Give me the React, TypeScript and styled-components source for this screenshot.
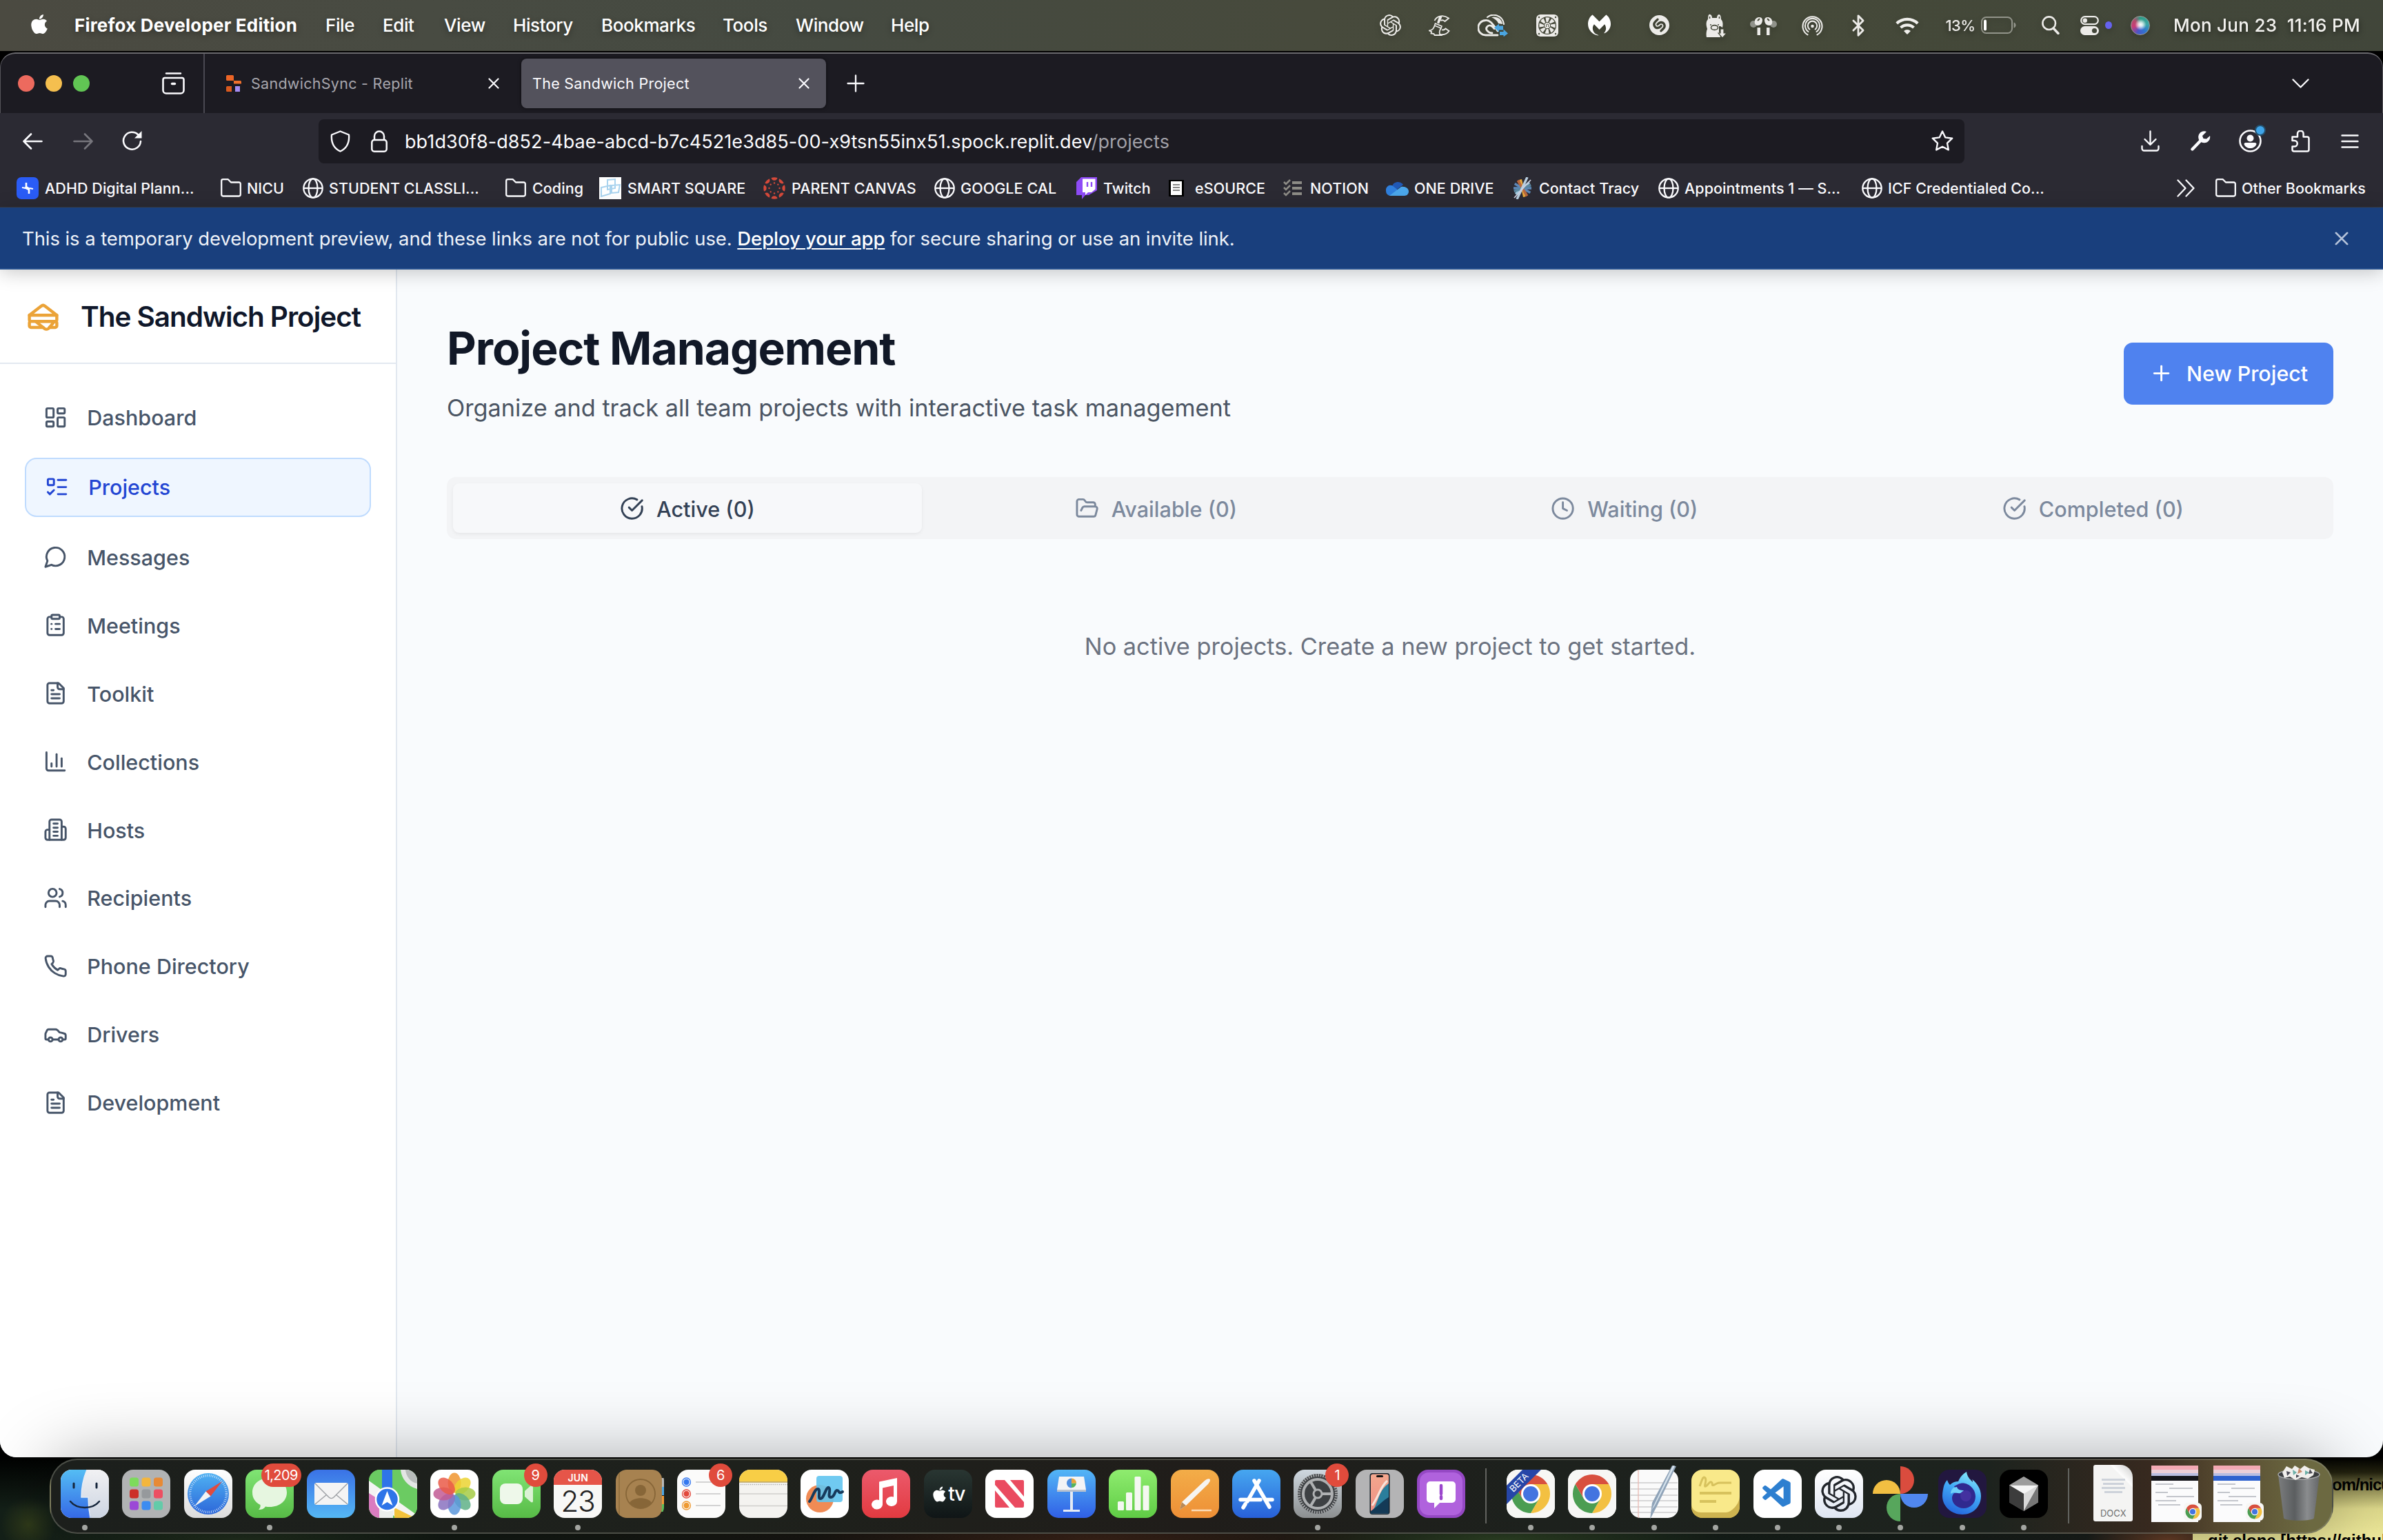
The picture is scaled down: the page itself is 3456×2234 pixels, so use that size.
import React from "react";
import styled, { createGlobalStyle } from "styled-components";
import { LayoutDashboard, ListTodo, ClipboardList, ChartColumn, Users, Car, CircleCheckBig, FolderOpen, Clock, Plus, Bluetooth } from "lucide-react";
import { FaApple, FaTwitch } from "react-icons/fa";
import { SiMalwarebytes, SiShazam, SiFirefoxbrowser } from "react-icons/si";
import { VscVscode } from "react-icons/vsc";

const font = `Inter, "Liberation Sans", sans-serif`;

const GlobalStyle = createGlobalStyle`
  * { box-sizing: border-box; }
  html, body { margin: 0; padding: 0; background: #000; }
  body { width: 3456px; height: 2234px; overflow: hidden; font-family: ${font}; }
  svg { display: block; flex: none; }
`;

/* ---------- desktop ---------- */

const Desktop = styled.div`
  position: relative;
  width: 3456px;
  height: 2234px;
  overflow: hidden;
  display: flex;
  flex-direction: column;
  background:
    linear-gradient(#000, #000) 0 0 / 100% 2100px no-repeat,
    linear-gradient(180deg, #000 2110px, transparent 2190px),
    radial-gradient(40px 40px at 1.2% 99%, #2f3a1a 0%, transparent 100%),
    radial-gradient(300px 40px at 10% 100%, #22301f 0%, transparent 100%),
    radial-gradient(420px 50px at 46% 100%, #3c2519 0%, transparent 100%),
    radial-gradient(320px 40px at 63% 100%, #2f4526 0%, transparent 100%),
    radial-gradient(120px 40px at 91% 100%, #6b4028 0%, transparent 100%),
    linear-gradient(90deg, #142018 0%, #131a14 20%, #1d1512 45%, #16201a 70%, #1b1d1c 100%);
`;

const StickyNote = styled.div`
  position: absolute;
  left: 3180px;
  top: 2114px;
  width: 276px;
  height: 120px;
  background: linear-gradient(180deg, #000 0, #23220f 22px, #9a965c 50px, #ddd88b 75px, #f0eb9c 100%);
  color: #000;
  font: 700 24px "Liberation Sans", sans-serif;
  white-space: nowrap;
  overflow: hidden;
`;
const StickyLine = styled.div<{ $left: number; $top: number; $ls?: number }>`
  position: absolute;
  left: ${(p) => p.$left}px;
  top: ${(p) => p.$top}px;
  line-height: 32px;
  letter-spacing: ${(p) => p.$ls ?? 0}px;
`;

/* ---------- menu bar ---------- */

const MenuBar = styled.header`
  flex: none;
  height: 74px;
  padding: 0 35px 1px 41px;
  display: flex;
  align-items: center;
  background: linear-gradient(90deg, #4b4a41 0%, #484b42 18%, #454a41 35%, #474a3c 55%, #454939 75%, #41463a 100%);
  color: #fff;
  font-size: 26px;
  text-shadow: 0 3px 8px rgba(0, 0, 0, 0.35);
`;
const AppleMark = styled.div`
  width: 67px;
  padding-bottom: 3px;
`;
const MenuLabel = styled.span<{ $w: number; $bold?: boolean }>`
  width: ${(p) => p.$w}px;
  font-weight: ${(p) => (p.$bold ? 700 : 500)};
  letter-spacing: ${(p) => (p.$bold ? 0.2 : -0.4)}px;
  white-space: nowrap;
`;
const StatusArea = styled.div`
  margin-left: auto;
  display: flex;
  align-items: center;
  color: #ecebe8;
  filter: drop-shadow(0 3px 4px rgba(0, 0, 0, 0.2));
`;
const StatusItem = styled.div<{ $w: number; $gap: number }>`
  width: ${(p) => p.$w}px;
  margin-left: ${(p) => p.$gap}px;
  display: flex;
  align-items: center;
  justify-content: center;
`;
const Percent = styled.span`
  font-size: 22px;
  font-weight: 500;
  letter-spacing: -0.6px;
`;
const ClockText = styled.div`
  width: 269px;
  margin-left: 34px;
  margin-right: 0;
  font-weight: 500;
  white-space: pre;
  color: #f2f1ee;
  letter-spacing: 0.28px;
`;
const Siri = styled.div`
  width: 28px;
  height: 28px;
  border-radius: 50%;
  border: 1px solid #9a9a96;
  background:
    radial-gradient(circle at 52% 45%, #fff 0%, rgba(255, 255, 255, 0.75) 16%, transparent 42%),
    conic-gradient(from 0deg, #2f9c86, #3aa7a5 80deg, #2f74d0 140deg, #4a55c8 200deg, #c93c78 260deg, #b5496b 310deg, #2f9c86);
`;
const MicDot = styled.div`
  width: 10px;
  height: 11px;
  border-radius: 50%;
  background: #6562ee;
`;

/* ---------- browser window ---------- */

const BrowserWindow = styled.section`
  flex: none;
  margin-top: 2px;
  height: 2038px;
  border-radius: 22px 22px 24px 24px;
  overflow: hidden;
  display: flex;
  flex-direction: column;
  background: #1c1b22;
`;
const TabStrip = styled.div`
  flex: none;
  height: 88px;
  border-top: 2px solid #6a696e;
  border-left: 1px solid #55545a;
  border-right: 1px solid #55545a;
  border-radius: 22px 22px 0 0;
  display: flex;
  align-items: center;
  padding-left: 25px;
  background: #1c1b22;
`;
const Lights = styled.div`
  display: flex;
  gap: 16px;
  width: 209px;
`;
const Light = styled.i<{ $c: string }>`
  width: 24px;
  height: 24px;
  border-radius: 50%;
  background: ${(p) => p.$c};
`;
const StripDivider = styled.div`
  width: 2px;
  height: 86px;
  margin: 0 7px 0 27px;
  background: #4a4952;
`;
const Tab = styled.div<{ $active?: boolean }>`
  width: ${(p) => (p.$active ? 442 : 440)}px;
  height: 72px;
  margin-left: ${(p) => (p.$active ? 8 : 4)}px;
  padding: 0 24px 0 ${(p) => (p.$active ? 16 : 20)}px;
  border-radius: 8px;
  display: flex;
  align-items: center;
  background: ${(p) => (p.$active ? "#53525c" : "transparent")};
  box-shadow: ${(p) => (p.$active ? "0 0 5px rgba(0,0,0,.6)" : "none")};
  color: ${(p) => (p.$active ? "#fbfbfe" : "#a7a6ad")};
  font-size: 21.5px;
`;
const TabTitle = styled.span`
  flex: 1;
  letter-spacing: 0.28px;
  white-space: nowrap;
`;
const TabFavicon = styled.div`
  width: 36px;
`;
const NewTab = styled.div`
  margin-left: 30px;
`;
const AllTabs = styled.div`
  margin-left: auto;
  margin-right: 106px;
`;
const NavBar = styled.div`
  flex: none;
  height: 81px;
  display: flex;
  align-items: center;
  padding: 0 35px 0 33px;
  background: #2b2a33;
`;
const NavSlot = styled.div<{ $w: number; $gap?: number }>`
  width: ${(p) => p.$w}px;
  margin-left: ${(p) => p.$gap ?? 0}px;
  display: flex;
  justify-content: center;
  position: relative;
`;
const UrlBar = styled.div`
  width: 2388px;
  height: 64px;
  margin-left: 255px;
  padding: 0 16px 0 17px;
  border-radius: 8px;
  background: #1c1b22;
  display: flex;
  align-items: center;
`;
const Url = styled.div`
  flex: 1;
  margin-left: 25px;
  padding-top: 1px;
  font-size: 27px;
  color: #fbfbfe;
  letter-spacing: 0.08px;
  white-space: nowrap;
`;
const UrlPath = styled.span`
  color: #a2a1a8;
`;
const NoticeDot = styled.i`
  position: absolute;
  right: -6px;
  top: -7px;
  width: 16px;
  height: 16px;
  border-radius: 50%;
  background: #3fa4e8;
  border: 2px solid #24506e;
`;
const BookmarkBar = styled.div`
  flex: none;
  height: 56px;
  padding: 0 25px 0 24px;
  display: flex;
  align-items: center;
  background: #2b2a33;
  border-bottom: 1px solid #3b3a3d;
  color: #fbfbfe;
`;
const Bookmark = styled.div<{ $w: number }>`
  width: ${(p) => p.$w}px;
  display: flex;
  align-items: center;
`;
const BookmarkIcon = styled.div<{ $w: number }>`
  width: ${(p) => p.$w}px;
`;
const BookmarkText = styled.span`
  font-size: 21.5px;
  font-weight: 500;
  letter-spacing: 0.06px;
  padding-top: 1px;
  white-space: nowrap;
`;
const BookmarkEnd = styled.div`
  margin-left: auto;
  display: flex;
  align-items: center;
  width: 274px;
`;

const Banner = styled.div`
  flex: none;
  height: 90px;
  padding: 2px 50px 0 32px;
  display: flex;
  align-items: center;
  justify-content: space-between;
  position: relative;
  z-index: 1;
  background: #193f7d;
  border-bottom: 2px solid #28528f;
  box-shadow: 0 4px 26px rgba(0, 0, 0, 0.22);
  color: #eef2f8;
  font-size: 27.5px;
  letter-spacing: -0.08px;
`;
const DeployLink = styled.a`
  color: #fff;
  font-weight: 500;
  text-decoration: underline;
  text-decoration-thickness: 2px;
  text-underline-offset: 4px;
`;

/* ---------- page ---------- */

const Page = styled.div`
  flex: 1;
  display: flex;
  background: #f9fbfd;
`;
const Sidebar = styled.aside`
  flex: none;
  width: 576px;
  border-right: 2px solid #e2e8f0;
  background: #fff;
`;
const Brand = styled.div`
  height: 137px;
  padding: 1px 0 0 36px;
  display: flex;
  align-items: center;
  border-bottom: 2px solid #e2e8f0;
`;
const BrandMark = styled.div`
  color: #eba338;
`;
const BrandName = styled.div`
  margin-left: 28px;
  font-size: 40.5px;
  font-weight: 600;
  color: #0f172a;
  letter-spacing: -1.05px;
  white-space: nowrap;
`;
const NavList = styled.nav`
  padding: 37px 36px 0;
  display: flex;
  flex-direction: column;
  gap: 17.6px;
`;
const NavRow = styled.a<{ $active?: boolean }>`
  height: ${(p) => (p.$active ? 85.8 : 81.4)}px;
  padding-left: 27px;
  display: flex;
  align-items: center;
  gap: 28px;
  border: ${(p) => (p.$active ? "2px solid #bfdbfe" : "none")};
  border-radius: 17px;
  background: ${(p) => (p.$active ? "#eff6ff" : "transparent")};
  color: ${(p) => (p.$active ? "#2346d3" : "#475569")};
  font-size: 30.5px;
  font-weight: 500;
  white-space: nowrap;
`;
const Main = styled.main`
  flex: 1;
  padding: 75px 72px 0;
`;
const PageHead = styled.div`
  display: flex;
  align-items: center;
  justify-content: space-between;
`;
const Title = styled.h1`
  margin: 0;
  font-size: 66px;
  line-height: 79px;
  font-weight: 700;
  letter-spacing: -1.05px;
  color: #111827;
`;
const Subtitle = styled.p`
  margin: 20px 0 0;
  font-size: 34.3px;
  line-height: 53px;
  color: #4b5563;
  letter-spacing: -0.02px;
`;
const NewProject = styled.button`
  width: 304px;
  height: 90px;
  border: 0;
  border-radius: 13px;
  background: #4f82ef;
  color: #fff;
  font: 500 30.4px ${font};
  display: flex;
  align-items: center;
  justify-content: center;
  gap: 19px;
  white-space: nowrap;
`;
const Tabs = styled.div`
  margin-top: 74px;
  height: 90px;
  padding: 9px;
  border-radius: 13px;
  background: #f3f4f6;
  display: grid;
  grid-template-columns: repeat(4, 1fr);
`;
const TabTrigger = styled.div<{ $active?: boolean }>`
  display: flex;
  align-items: center;
  justify-content: center;
  gap: 18px;
  padding-top: 2px;
  border-radius: 9px;
  background: ${(p) => (p.$active ? "#f7f8fa" : "transparent")};
  box-shadow: ${(p) => (p.$active ? "0 2px 5px rgba(0,0,0,.06)" : "none")};
  color: ${(p) => (p.$active ? "#334155" : "#7c899d")};
  font-size: 30.6px;
  font-weight: 500;
  white-space: nowrap;
`;
const Empty = styled.div`
  margin-top: 129px;
  text-align: center;
  font-size: 34.3px;
  line-height: 53px;
  color: #6b7280;
`;

/* ---------- dock ---------- */

const Dock = styled.footer`
  flex: none;
  position: relative;
  width: 3312px;
  height: 109px;
  margin: 2px 0 0 72px;
  padding-left: 4px;
  border: 2px solid rgba(150, 152, 140, 0.38);
  border-radius: 40px;
  display: flex;
  background: linear-gradient(90deg, #1c1f1c 0%, #1e211c 30%, #201d1a 50%, #1d211d 65%, #1d231e 85%, #37291f 92%, #55482f 95%, #6c6941 99%);
  box-shadow: 0 0 100px rgba(0, 0, 0, 0.34);
`;
const DockSlot = styled.div<{ $w?: number }>`
  position: relative;
  flex: none;
  width: ${(p) => p.$w ?? 89.45}px;
  padding-top: 14px;
  display: flex;
  flex-direction: column;
  align-items: center;
`;
const DockSeparator = styled.div`
  flex: none;
  width: 2px;
  height: 80px;
  margin: 12px 19px 0;
  background: #62635f;
`;
const Running = styled.i`
  position: absolute;
  top: 94px;
  width: 8px;
  height: 8px;
  border-radius: 50%;
  background: #a3a5a1;
`;
const Badge = styled.span<{ $right: number }>`
  position: absolute;
  top: 5px;
  right: ${(p) => p.$right}px;
  min-width: 34px;
  height: 34px;
  padding: 0 5px;
  border-radius: 17px;
  background: #e04b3c;
  color: #fff;
  font-size: 20px;
  letter-spacing: -0.6px;
  line-height: 34px;
  text-align: center;
`;
const Tile = styled.div<{ $bg: string }>`
  position: relative;
  width: 70px;
  height: 70px;
  border-radius: 16px;
  overflow: hidden;
  background: ${(p) => p.$bg};
  display: flex;
  align-items: center;
  justify-content: center;
`;
const CalendarTile = styled(Tile)`
  flex-direction: column;
  justify-content: flex-start;
  color: #222;
  font-size: 42px;
  line-height: 47px;
  letter-spacing: -1px;
  font-weight: 300;
`;
const CalendarMonth = styled.div`
  width: 70px;
  height: 22px;
  background: #e65549;
  color: #fff;
  font-size: 14px;
  font-weight: 600;
  line-height: 23px;
  letter-spacing: 0.2px;
  text-align: center;
`;
const TvLabel = styled.span`
  color: #fff;
  font-size: 28px;
  font-weight: 500;
  letter-spacing: -1px;
`;
const BetaRibbon = styled.span`
  position: absolute;
  left: -24px;
  top: 9px;
  width: 84px;
  height: 19px;
  background: #2646a8;
  color: #fff;
  font-size: 13px;
  line-height: 19px;
  text-align: center;
  transform: rotate(-45deg);
`;
const DocSheet = styled.div`
  width: 57px;
  height: 82px;
  margin-top: -7px;
  background: linear-gradient(225deg, #c9c9c8 0, #fdfdfd 22px, #f4f4f3 24px);
  border-radius: 3px 18px 3px 3px;
  display: flex;
  flex-direction: column;
  align-items: center;
  gap: 3px;
  padding-top: 20px;
  color: #6c6c6c;
  font-size: 13px;
`;
const DocLine = styled.i<{ $w: number }>`
  width: ${(p) => p.$w}px;
  height: 3px;
  background: #cdd2da;
`;
const DocType = styled.span`
  margin-top: auto;
  padding-bottom: 4px;
`;
const Thumb = styled.div`
  position: relative;
  width: 68px;
  height: 82px;
  margin-top: -6px;
  background: #fbfbfc;
`;
const ThumbBand = styled.i<{ $h: number; $c: string }>`
  display: block;
  height: ${(p) => p.$h}px;
  background: ${(p) => p.$c};
`;
const ThumbText = styled.i<{ $w: number; $x: number }>`
  display: block;
  width: ${(p) => p.$w}px;
  height: 2px;
  margin: 4px 0 0 ${(p) => p.$x}px;
  background: #c3c6cc;
`;
const ThumbBadge = styled.div`
  position: absolute;
  right: -5px;
  bottom: 2px;
`;

/* ---------- glyphs ---------- */

type G = { size?: number; children?: React.ReactNode };
const Line = ({ size = 35.2, children }: G) => (
  <svg width={size} height={size} viewBox="0 0 24 24" fill="none" stroke="currentColor" strokeWidth={2} strokeLinecap="round" strokeLinejoin="round">{children}</svg>
);
const SandwichIcon = () => (
  <Line size={53}>
    <path d="M3 11v3a1 1 0 0 0 1 1h16a1 1 0 0 0 1-1v-3" />
    <path d="M12 19H4a1 1 0 0 1-1-1v-2a1 1 0 0 1 1-1h16a1 1 0 0 1 1 1v2a1 1 0 0 1-1 1h-3.83" />
    <path d="m3 11 7.77-6.04a2 2 0 0 1 2.46 0L21 11H3Z" />
    <path d="M12.97 19.77 7 15h12.5l-3.75 4.5a2 2 0 0 1-2.78.27Z" />
  </Line>
);
const MessageIcon = () => <Line><path d="M7.9 20A9 9 0 1 0 4 16.1L2 22Z" /></Line>;
const FileIcon = () => (
  <Line>
    <path d="M15 2H6a2 2 0 0 0-2 2v16a2 2 0 0 0 2 2h12a2 2 0 0 0 2-2V7Z" />
    <path d="M14 2v4a2 2 0 0 0 2 2h4M10 9H8M16 13H8M16 17H8" />
  </Line>
);
const BuildingIcon = () => (
  <Line>
    <path d="M6 22V4a2 2 0 0 1 2-2h8a2 2 0 0 1 2 2v18Z" />
    <path d="M6 12H4a2 2 0 0 0-2 2v6a2 2 0 0 0 2 2h2M18 9h2a2 2 0 0 1 2 2v9a2 2 0 0 1-2 2h-2M10 6h4M10 10h4M10 14h4M10 18h4" />
  </Line>
);
const PhoneIcon = () => (
  <Line><path d="M22 16.92v3a2 2 0 0 1-2.18 2 19.79 19.79 0 0 1-8.63-3.07 19.5 19.5 0 0 1-6-6 19.79 19.79 0 0 1-3.07-8.67A2 2 0 0 1 4.11 2h3a2 2 0 0 1 2 1.72 12.84 12.84 0 0 0 .7 2.81 2 2 0 0 1-.45 2.11L8.09 9.91a16 16 0 0 0 6 6l1.27-1.27a2 2 0 0 1 2.11-.45 12.84 12.84 0 0 0 2.81.7A2 2 0 0 1 22 16.92z" /></Line>
);
const KnotIcon = ({ size = 31, color = "currentColor" }: { size?: number; color?: string }) => (
  <svg width={size} height={size} viewBox="0 0 24 24" fill={color}>
    <path d="M22.2819 9.8211a5.9847 5.9847 0 0 0-.5157-4.9108 6.0462 6.0462 0 0 0-6.5098-2.9A6.0651 6.0651 0 0 0 4.9807 4.1818a5.9847 5.9847 0 0 0-3.9977 2.9 6.0462 6.0462 0 0 0 .7427 7.0966 5.98 5.98 0 0 0 .511 4.9107 6.051 6.051 0 0 0 6.5146 2.9001A5.9847 5.9847 0 0 0 13.2599 24a6.0557 6.0557 0 0 0 5.7718-4.2058 5.9894 5.9894 0 0 0 3.9977-2.9001 6.0557 6.0557 0 0 0-.7475-7.0729zm-9.022 12.6081a4.4755 4.4755 0 0 1-2.8764-1.0408l.1419-.0804 4.7783-2.7582a.7948.7948 0 0 0 .3927-.6813v-6.7369l2.02 1.1686a.071.071 0 0 1 .038.052v5.5826a4.504 4.504 0 0 1-4.4945 4.4944zm-9.6607-4.1254a4.4708 4.4708 0 0 1-.5346-3.0137l.142.0852 4.783 2.7582a.7712.7712 0 0 0 .7806 0l5.8428-3.3685v2.3324a.0804.0804 0 0 1-.0332.0615L9.74 19.9502a4.4992 4.4992 0 0 1-6.1408-1.6464zM2.3408 7.8956a4.485 4.485 0 0 1 2.3655-1.9728V11.6a.7664.7664 0 0 0 .3879.6765l5.8144 3.3543-2.0201 1.1685a.0757.0757 0 0 1-.071 0l-4.8303-2.7865A4.504 4.504 0 0 1 2.3408 7.872zm16.5963 3.8558L13.1038 8.364 15.1192 7.2a.0757.0757 0 0 1 .071 0l4.8303 2.7913a4.4944 4.4944 0 0 1-.6765 8.1042v-5.6772a.79.79 0 0 0-.407-.667zm2.0107-3.0231l-.142-.0852-4.7735-2.7818a.7759.7759 0 0 0-.7854 0L9.409 9.2297V6.8974a.0662.0662 0 0 1 .0284-.0615l4.8303-2.7866a4.4992 4.4992 0 0 1 6.6802 4.66zM8.3065 12.863l-2.02-1.1638a.0804.0804 0 0 1-.038-.0567V6.0742a4.4992 4.4992 0 0 1 7.3757-3.4537l-.142.0805L8.704 5.459a.7948.7948 0 0 0-.3927.6813zm1.0976-2.3654l2.602-1.4998 2.6069 1.4998v2.9994l-2.5974 1.4997-2.6067-1.4997Z" />
  </svg>
);
const CleanerIcon = () => (
  <svg width="31" height="31" viewBox="0 0 31 31" fill="none" stroke="#ecebe8" strokeWidth="1.9">
    <path d="M8.500 9C11 3 20-1 29 5.500L23.500 10C21 8 19 8 17.500 9M19 22c2 1 4 0 5.500-1.500L29.500 24c-3 4-8 6-13 5" />
    <path d="M15.500 2l4 1.500-4.500 10-3-1.500z" fill="#ecebe8" stroke="none" />
    <path d="M9.500 13l9.500 4-1 3-9.500-4z" strokeWidth="1.600" />
    <path d="M8.500 16.500C7 21 4 23 1 23.500l3 1.500-.500 2.500 4 .500 1 2 9 0c-3-2-2-6 0-10" strokeWidth="1.800" />
  </svg>
);
const CloudSyncIcon = () => (
  <svg width="45" height="32" viewBox="0 0 45 32" fill="none" stroke="#ecebe8" strokeLinecap="round">
    <path d="M14 4C21-2 36 0 38 14" strokeWidth="2.200" />
    <path d="M20 4c6-2 15 1 16 10l-6-1C28 8 24 6 20 4z" fill="#ecebe8" stroke="none" />
    <path d="M21 27c-5 0-11-5-7-9.500 4-4 8 0 10 3" strokeWidth="2.800" />
    <path d="M29 30H11.500A10 10 0 0 1 11.500 8.500C18 8 22 14 26 19.500l3 4.500" strokeWidth="2.800" />
    <path d="M24 19l7-5.500v3h6v6h-6v3z" fill="#4aa5e0" stroke="none" />
    <path d="M32 25h5.500v-3.500L44 27.500l-6.500 5V30H32z" fill="#4aa5e0" stroke="none" />
  </svg>
);
const FanIcon = () => (
  <svg width="32" height="32" viewBox="0 0 32 32">
    <rect width="32" height="32" rx="6" fill="#ecebe8" />
    <circle cx="16" cy="16" r="13" fill="#474a3b" />
    {[0, 45, 90, 135, 180, 225, 270, 315].map((a) => (
      <path key={a} d="M14.500 11 13.500 4.500a12 12 0 0 1 6 .3L17 11z" fill="#ecebe8" transform={`rotate(${a} 16 16)`} />
    ))}
    <circle cx="16" cy="16" r="4.600" fill="#ecebe8" stroke="#474a3b" strokeWidth="1" />
    <path d="M14.500 18v-2.500a1.600 1.600 0 0 1 3.200 0V18" stroke="#474a3b" fill="none" />
    {[[4, 4], [28, 4], [4, 28], [28, 28]].map(([x, y]) => <circle key={`${x}-${y}`} cx={x} cy={y} r="1.200" fill="#474a3b" />)}
  </svg>
);
const LlamaIcon = () => (
  <svg width="29" height="34" viewBox="0 0 29 34">
    <path d="M3 8C3 3 4 0 6 1c2 0 3 3 3 5h7c0-2 1-5 3-5 2 0 3 3 3 7 3 3 3 8 2 12l-3-2h-2v8l2 8H1c-1-5 0-10 1-12C0 16 0 11 3 8z" fill="#ecebe8" />
    <path d="M5.500 7V4M19.500 7V4" stroke="#474a3b" strokeWidth="1.600" />
    <ellipse cx="12.500" cy="20" rx="5" ry="3.400" fill="none" stroke="#474a3b" strokeWidth="1.600" />
    <circle cx="7" cy="16" r="1" fill="#474a3b" /><circle cx="18" cy="16" r="1" fill="#474a3b" />
    <path d="M21 22h5v6h4l-6 7-6-7h3z" fill="#ecebe8" stroke="#474a3b" strokeWidth="1.200" />
  </svg>
);
const AirPodsIcon = () => (
  <svg width="39" height="30" viewBox="0 0 39 30">
    <circle cx="5" cy="13" r="5" fill="#90928a" /><circle cx="34" cy="13" r="5" fill="#90928a" />
    <path d="M7 8c1-6 11-7 11-1 0 5-3 8-7 8-3 0-5-3-4-7zM32 8c-1-6-11-7-11-1 0 5 3 8 7 8 3 0 5-3 4-7z" fill="#ecebe8" />
    <path d="M10.500 18H15v11h-4.500zM24 18h4.500v11H24z" fill="#ecebe8" />
    <path d="M11 8l3-3M28 8l-3-3" stroke="#474a3b" strokeWidth="2" />
  </svg>
);
const AirdropIcon = () => (
  <svg width="31" height="30" viewBox="0 0 31 30" fill="none" stroke="#ecebe8" strokeWidth="2.100" strokeLinecap="round">
    <path d="M8.500 28.300a14 14 0 1 1 14 0M9.500 24a10.500 10.500 0 1 1 12 0M11.300 20.500a6.700 6.700 0 1 1 8.400 0" />
    <circle cx="15.500" cy="16" r="2.300" fill="#ecebe8" stroke="none" />
  </svg>
);
const WifiGlyph = () => (
  <svg width="34" height="26" viewBox="0 0 34 26" fill="none" stroke="#f0efec" strokeWidth="4.200">
    <path d="M1.800 10a22 22 0 0 1 30.400 0M7.500 16a14 14 0 0 1 19 0" />
    <path d="M17 26l-5-5a7.500 7.500 0 0 1 10 0z" fill="#f0efec" stroke="none" />
  </svg>
);
const BatteryIcon = () => (
  <svg width="51" height="28" viewBox="0 0 51 28">
    <rect x="1" y="2" width="44" height="23" rx="6.500" fill="none" stroke="#92948a" strokeWidth="2" />
    <rect x="4" y="5.500" width="4" height="16" rx="2" fill="#fff" />
    <path d="M47.500 9.500c4 1 4 7 0 8z" fill="#92948a" />
  </svg>
);
const SearchGlyph = () => (
  <svg width="26" height="27" viewBox="0 0 26 27" fill="none" stroke="#ecebe8" strokeWidth="2.600">
    <circle cx="10.700" cy="10.700" r="9.300" /><path d="m17 18 7 7.500" strokeWidth="3.400" strokeLinecap="round" />
  </svg>
);
const ControlIcon = () => (
  <svg width="27" height="28" viewBox="0 0 27 28">
    <rect x="1.200" y="1.200" width="24.600" height="11" rx="5.500" fill="none" stroke="#ecebe8" strokeWidth="2.200" />
    <circle cx="6.800" cy="6.700" r="3.200" fill="#ecebe8" />
    <rect y="15" width="27" height="13" rx="6.500" fill="#ecebe8" />
    <circle cx="20.500" cy="21.500" r="3.600" fill="#43473a" />
  </svg>
);

const CrossIcon = ({ size = 16, color = "#fbfbfe" }: { size?: number; color?: string }) => (
  <svg width={size} height={size} viewBox="0 0 16 16" stroke={color} strokeWidth="2.200" strokeLinecap="round"><path d="M1.500 1.500l13 13M14.500 1.500l-13 13" /></svg>
);
const FirefoxViewIcon = () => (
  <svg width="33" height="32" viewBox="0 0 33 32" fill="none" stroke="#fbfbfe" strokeWidth="2.600" strokeLinecap="round">
    <path d="M6 1.500h21M4 8h25" /><path d="M4 8a2.500 2.500 0 0 0-2.500 2.500V26A4.500 4.500 0 0 0 6 30.500h21a4.500 4.500 0 0 0 4.500-4.500V10.500A2.500 2.500 0 0 0 29 8" />
    <path d="M14.500 16.500h4" strokeWidth="3.400" />
  </svg>
);
const ReplitIcon = () => (
  <svg width="22" height="24" viewBox="0 0 22 24">
    <path d="M0 1.500A1.500 1.500 0 0 1 1.500 0h8A1.500 1.500 0 0 1 11 1.500V8H1.500A1.500 1.500 0 0 1 0 6.500z" fill="#ec6526" />
    <path d="M11 8h9.500A1.500 1.500 0 0 1 22 9.500v3H11z" fill="#f0702d" />
    <path d="M0 17.500A1.500 1.500 0 0 1 1.500 16H8v8H1.500A1.500 1.500 0 0 1 0 22.500z" fill="#d8591f" />
    <path d="M13 16h7v8h-7z" fill="#a58cf4" />
  </svg>
);
const ArrowIcon = ({ flip, color = "#fbfbfe" }: { flip?: boolean; color?: string }) => (
  <svg width="29" height="24" viewBox="0 0 29 24" fill="none" stroke={color} strokeWidth="2.600" strokeLinecap="round" strokeLinejoin="round">
    <path d={flip ? "M1.500 12h26M17 1.500 27.500 12 17 22.500" : "M27.500 12h-26M12 1.500 1.500 12 12 22.500"} />
  </svg>
);
const ReloadIcon = () => (
  <svg width="30" height="29" viewBox="0 0 30 29" fill="none" stroke="#fbfbfe" strokeWidth="2.600" strokeLinecap="round">
    <path d="M27 15A12.500 12.500 0 1 1 23.500 5.500" /><path d="M28.500 0v10.500H18z" fill="#fbfbfe" stroke="none" />
  </svg>
);
const ShieldIcon = () => (
  <svg width="29" height="32" viewBox="0 0 29 32" fill="none" stroke="#fbfbfe" strokeWidth="2.400" strokeLinejoin="round"><path d="M14.500 1.500 27 6.500c1 12-4 20-12.500 24C6 26.500 1 18.500 2 6.500z" /></svg>
);
const LockIcon = () => (
  <svg width="24" height="32" viewBox="0 0 24 32" fill="none" stroke="#fbfbfe" strokeWidth="2.500"><rect x="1.300" y="14" width="21.400" height="16.700" rx="3.500" /><path d="M5 14V8.500a7 7 0 0 1 14 0V14" /></svg>
);
const StarIcon = () => (
  <svg width="32" height="31" viewBox="0 0 32 31" fill="none" stroke="#fbfbfe" strokeWidth="2.400" strokeLinejoin="round"><path d="M16 1.500l4.300 8.900 9.900 1.300-7.200 6.900 1.800 9.800L16 23.700l-8.800 4.700L9 18.600l-7.200-6.900 9.900-1.300z" /></svg>
);
const DownloadIcon = () => (
  <svg width="27" height="31" viewBox="0 0 27 31" fill="none" stroke="#fbfbfe" strokeWidth="2.400" strokeLinecap="round" strokeLinejoin="round"><path d="M13.500 1.500v19M5.500 13l8 8 8-8M1.500 23v3.500a3 3 0 0 0 3 3h18a3 3 0 0 0 3-3V23" /></svg>
);
const WrenchIcon = () => (
  <svg width="29" height="29" viewBox="0 0 29 29"><path d="M2.500 26.500 15 13.500" stroke="#fbfbfe" strokeWidth="4.400" strokeLinecap="round" /><path d="M23 1a8.500 8.500 0 1 0 5 6l-5 4.500-4.500-.5-1.500-4z" fill="#fbfbfe" /></svg>
);
const AccountIcon = () => (
  <svg width="33" height="33" viewBox="0 0 33 33"><circle cx="16.500" cy="16.500" r="15" fill="none" stroke="#fbfbfe" strokeWidth="2.600" /><circle cx="16.500" cy="12.500" r="5" fill="#fbfbfe" /><path d="M7.500 21c0-1 1-2 2-2h14c1 0 2 1 2 2-1.500 4-5 6-9 6s-7.500-2-9-6z" fill="#fbfbfe" /></svg>
);
const PuzzleIcon = () => (
  <svg width="27" height="32" viewBox="0 0 27 32" fill="none" stroke="#fbfbfe" strokeWidth="2.500" strokeLinejoin="round"><path d="M1.500 15V9.500H9V5a4.300 4.300 0 0 1 8.600 0v4.500H23a2.500 2.500 0 0 1 2.500 2.500v16a2.500 2.500 0 0 1-2.500 2.500H4A2.500 2.500 0 0 1 1.500 28v-4.500h3a4.200 4.200 0 0 0 0-8.500z" /></svg>
);
const BurgerIcon = () => (
  <svg width="26" height="20" viewBox="0 0 26 20" stroke="#fbfbfe" strokeWidth="2.400" strokeLinecap="round"><path d="M1.500 1.500h23M1.500 10h23M1.500 18.500h23" /></svg>
);
const FolderIcon = () => (
  <svg width="30" height="27" viewBox="0 0 30 27" fill="none" stroke="#fbfbfe" strokeWidth="2.300" strokeLinejoin="round"><path d="M1.200 23V3.500A2.300 2.300 0 0 1 3.500 1.200h7.300L15 5.500h11.500a2.300 2.300 0 0 1 2.300 2.300V23a2.500 2.500 0 0 1-2.300 2.500h-23A2.500 2.500 0 0 1 1.200 23z" /></svg>
);
const GlobeIcon = () => (
  <svg width="30" height="30" viewBox="0 0 30 30" fill="none" stroke="#fbfbfe" strokeWidth="2.300"><circle cx="15" cy="15" r="13.700" /><ellipse cx="15" cy="15" rx="6.500" ry="13.700" /><path d="M1.500 15h27" /></svg>
);
const PlannerIcon = () => (
  <svg width="32" height="32" viewBox="0 0 32 32"><rect width="32" height="32" rx="7" fill="#2a5cf6" /><path d="M14 8v6l5 3M18 24v-6l-6-3" stroke="#fff" strokeWidth="2.600" fill="none" /><path d="M8 15l5 1M19 16l5 1" stroke="#fff" strokeWidth="2" /></svg>
);
const SquareIcon = () => (
  <svg width="32" height="32" viewBox="0 0 32 32" fill="none" stroke="#a9d3ee" strokeWidth="2"><rect width="32" height="32" fill="#fff" stroke="none" /><path d="M12 4l11-1v13l-11 2zM3 15l13-3v12L3 28zM18 12l12-1-2 11-10 1z" /></svg>
);
const CanvasIcon = () => (
  <svg width="32" height="32" viewBox="0 0 32 32">
    {[0, 45, 90, 135, 180, 225, 270, 315].map((a) => (
      <g key={a} transform={`rotate(${a} 16 16)`} fill="#d6493a"><path d="M11.500 1a15.500 15.500 0 0 1 9 0 4.600 4.600 0 0 1-9 0z" /><circle cx="16" cy="8.500" r="1.200" /></g>
    ))}
  </svg>
);
const TwitchIcon = () => (
  <svg width="30" height="32" viewBox="0 0 30 32">
    <path d="M7 0h23v19L18 26h-5l-5 6v-6H0V7z" fill="#8e4bf6" /><path d="M9 2.500h18.500v15L22 22h-5l-4 4v-4H9z" fill="#fff" /><path d="M16 7v7M22 7v7" stroke="#8e4bf6" strokeWidth="2.400" />
  </svg>
);
const SourceIcon = () => (
  <svg width="22" height="24" viewBox="0 0 22 24"><rect width="22" height="24" fill="#000" /><rect x="3" y="2" width="16" height="20" fill="#fff" /><path d="M6 7h10M6 11h10M6 15h10" stroke="#888" strokeWidth="2" /></svg>
);
const ChecklistIcon = () => (
  <svg width="27" height="28" viewBox="0 0 27 28" fill="none" stroke="#8d8c86" strokeWidth="4"><path d="M13 6h14M13 14h14M13 22h14" /><path d="M1 5l3 3 6-6M1 13l3 3 6-6M1 21l3 3 6-6" strokeWidth="2.600" /></svg>
);
const CloudIcon = () => (
  <svg width="33" height="22" viewBox="0 0 33 22"><path d="M9 8a9 9 0 0 1 16-2l-12 9z" fill="#2058b5" /><path d="M0 15a7 7 0 0 1 9-8l10 8-13 7a7 7 0 0 1-6-7z" fill="#2f7fdc" /><path d="M5 22l17-13c6-1 11 2 11 7a6 6 0 0 1-6 6z" fill="#4ba6ea" /></svg>
);
const PinwheelFavicon = () => (
  <svg width="32" height="32" viewBox="0 0 32 32" strokeWidth="3.600">
    {[["#5d88b8", 90], ["#c6582c", -30], ["#e8a93c", -12], ["#9dc8dd", 50], ["#5d88b8", 120], ["#b8693f", 150], ["#5a87a0", 70]].map(([c, a]) => (
      <path key={a} d="M16 3v26" stroke={c as string} transform={`rotate(${a} 16 16)`} />
    ))}
    <path d="M23 0 8 32" stroke="#b9cfe0" strokeWidth="3.400" /><path d="M28 4 4 30" stroke="#cfd0e2" strokeWidth="1.800" />
  </svg>
);

/* ---------- dock artwork ---------- */

const Art = ({ children }: G) => <svg width="70" height="70" viewBox="0 0 70 70">{children}</svg>;

const ChromeArt = ({ size = 70 }: { size?: number }) => (
  <svg width={size} height={size} viewBox="0 0 70 70">
    <rect width="70" height="70" rx="16" fill="#f7f7f5" />
    <path d="M35 35V21h24.250A28 28 0 0 1 35 63l12.120-21z" fill="#f3c041" />
    <path d="M35 35l12.120 7L35 63A28 28 0 0 1 10.750 21l12.130 21z" fill="#4b9d52" />
    <path d="M35 35l-12.120 7L10.750 21a28 28 0 0 1 48.500 0H35z" fill="#d8503f" />
    <circle cx="35" cy="35" r="14" fill="#fff" />
    <circle cx="35" cy="35" r="11" fill="#4374e0" />
  </svg>
);
const FinderArt = () => (
  <Art>
    <defs>
      <linearGradient id="fa" x2="0" y2="1"><stop stopColor="#54bdf4" /><stop offset="1" stopColor="#3569e6" /></linearGradient>
      <linearGradient id="fb" x2="0" y2="1"><stop stopColor="#f1f1f3" /><stop offset="1" stopColor="#ccd4e2" /></linearGradient>
    </defs>
    <rect width="70" height="70" fill="url(#fb)" />
    <path d="M0 0h38c-5 12-8 26-8 40h10c0 10 1 20 4 30H0z" fill="url(#fa)" />
    <path d="M38 0c-5 12-8 26-8 40h10c0 10 1 20 3 30" fill="none" stroke="#e5ecf5" strokeWidth="1.500" />
    <path d="M19 20v6M52 20v6" stroke="#16263c" strokeWidth="3" strokeLinecap="round" />
    <path d="M14 46c10 12 32 12 42 0" fill="none" stroke="#16263c" strokeWidth="2.500" strokeLinecap="round" />
  </Art>
);
const LaunchpadArt = () => (
  <Art>
    {["#7ddb5c", "#f4b63d", "#e88a35", "#cc2f28", "#96999c", "#ec4f62", "#9b48d6", "#3b8cf0", "#63cba9"].map((c, i) => (
      <rect key={c} x={11 + (i % 3) * 17.500} y={11.500 + Math.floor(i / 3) * 17} width="13" height="13" rx="3.500" fill={c} />
    ))}
  </Art>
);
const SafariArt = () => (
  <Art>
    <defs><linearGradient id="sa" x2="0" y2="1"><stop stopColor="#4fb1f2" /><stop offset="1" stopColor="#2c66d9" /></linearGradient></defs>
    <circle cx="35" cy="35" r="30" fill="url(#sa)" />
    <circle cx="35" cy="35" r="26.500" fill="none" stroke="#dceafa" strokeWidth="3.500" strokeDasharray="0.800 1.980" />
    <path d="M55 17 38.500 38.500 31.500 31.500z" fill="#e14b3f" /><path d="M15 53l16.500-21.500 7 7z" fill="#f3f3f3" />
  </Art>
);
const MessagesArt = () => <Art><path d="M35 12c15 0 25 9 25 21S50 54 35 54c-2 0-4 0-6-.500-2 3-5 4.500-10 4.500 2-2 3-4 2.500-7C14 47 10 41 10 33c0-12 10-21 25-21z" fill="#e6f6e0" /></Art>;
const MailArt = () => (
  <Art><rect x="11" y="19" width="49" height="32" rx="3" fill="#f4f4f4" /><path d="M12 20l20 20c2 2 5 2 7 0l20-20M12 50l17-14M59 50 42 36" fill="none" stroke="#9fa2a6" strokeWidth="1.500" /></Art>
);
const MapsArt = () => (
  <Art>
    <rect width="70" height="70" fill="#6bcb62" /><path d="M46 0h24v28A32 32 0 0 1 46 0z" fill="#e3e5e4" /><path d="M53 0h17v20C60 18 54 10 53 0z" fill="#b8bcbb" />
    <path d="M0 16l70 50v4H40L0 38z" fill="#f4f4f2" /><path d="M0 34l22 14v22H0z" fill="#da7cc0" /><path d="M37 55l30 15H37z" fill="#f4c33c" /><path d="M15 40h20v30H15z" fill="#eceeec" />
    <path d="M19 0h15v34H19z" fill="#2f74e8" /><circle cx="26.500" cy="43" r="16.500" fill="#2f74e8" stroke="#fff" strokeWidth="2.500" /><path d="M26.500 31l8 21-8-5-8 5z" fill="#fff" />
  </Art>
);
const PhotosArt = () => (
  <Art>
    {["#f0952f", "#ecd431", "#a5cb45", "#5fb087", "#5b98dc", "#8a72c0", "#c25a94", "#ea5a48"].map((c, i) => (
      <ellipse key={c} cx="35" cy="19" rx="9.500" ry="14.500" fill={c} opacity="0.850" transform={`rotate(${i * 45} 35 35)`} />
    ))}
  </Art>
);
const FaceTimeArt = () => <Art><rect x="11" y="20" width="33" height="30" rx="8" fill="#eef8ea" /><path d="M47 31l9-8c1.500-1 3-.500 3 1.500v21c0 2-1.500 2.500-3 1.500l-9-8z" fill="#dcf2d5" /></Art>;
const ContactsArt = () => (
  <Art><rect x="66" y="12" width="4" height="13" fill="#b8b9b8" /><rect x="66" y="25" width="4" height="12" fill="#4ea7e6" /><rect x="66" y="38" width="4" height="12" fill="#ee9b3a" /><rect x="66" y="50" width="4" height="11" fill="#5cbf5a" />
    <rect width="67" height="70" rx="14" fill="#a78250" /><path d="M5 4v62" stroke="#94713f" strokeWidth="2" /><circle cx="36" cy="35" r="21" fill="none" stroke="#876638" strokeWidth="1.800" /><circle cx="36" cy="30" r="8" fill="#876638" /><path d="M20 48c5-9 27-9 32 0a21 21 0 0 1-32 0z" fill="#876638" />
  </Art>
);
const RemindersArt = () => (
  <Art>{["#3478f0", "#e2493c", "#ee9a33"].map((c, i) => (
    <g key={c}><circle cx="13.500" cy={18 + i * 17} r="6" fill="none" stroke={c} strokeWidth="1.300" /><circle cx="13.500" cy={18 + i * 17} r="4.200" fill={c} /><path d={`M27 ${18 + i * 17}h36`} stroke="#c6c6c6" strokeWidth="1.500" /></g>
  ))}</Art>
);
const NotesArt = () => (
  <Art><rect width="70" height="18" fill="#f8ce46" /><path d="M0 18h70" stroke="#b9a368" strokeWidth="1.500" /><path d="M2 21.500h68" stroke="#aaa" strokeWidth="1.500" strokeDasharray="1.300 1.500" /><path d="M0 35h70M0 52.500h70" stroke="#cfcfcc" strokeWidth="1.500" /></Art>
);
const FreeformArt = () => (
  <Art><circle cx="28" cy="42" r="20" fill="#f08b55" /><rect x="23" y="9" width="38" height="38" rx="4" fill="#60c4f0" opacity="0.900" /><path d="M13 46c4-4 7-18 12-18s-1 14 4 14 8-18 12-16-3 14 3 14 5-10 9-10 1 6 8 2" fill="none" stroke="#173a5c" strokeWidth="4" strokeLinecap="round" /></Art>
);
const MusicArt = () => <Art><path d="M25 17.500 51 12v34a8 7 0 1 1-5-6.500V23l-16 3.500v24a8 7 0 1 1-5-6.500z" fill="#fff" /></Art>;
const NewsArt = () => <Art><path d="M14 17a2 2 0 0 1 2-2h12l28 32v6a2 2 0 0 1-2 2H43L14 22zM14 30l21 25H16a2 2 0 0 1-2-2zM36 15h18a2 2 0 0 1 2 2v22z" fill="#ea4a60" /></Art>;
const KeynoteArt = () => (
  <Art><path d="M33 30h4v29h-4z" fill="#e5ebf4" /><path d="M23 58h24v3H23z" fill="#e8edf4" /><path d="M17 10h36l3 19H14z" fill="#f3f4f6" /><path d="M14 29h42v3H14z" fill="#b9c2cf" /><path d="M35 13v6.500h7A7 7 0 0 1 35 26z" fill="#55b45b" /><path d="M35 12.500a7 7 0 0 1 7 7h-7z" fill="#e8a43c" /><path d="M35 12.500v14a7 7 0 0 1 0-14z" fill="#4f8fe0" /></Art>
);
const NumbersArt = () => <Art>{[[13, 46, 13], [25, 33, 26], [37.500, 10, 49], [49.500, 23, 36]].map(([x, y, h]) => <rect key={x} x={x} y={y} width="9" height={h} rx="1.500" fill="#f4f8f1" />)}</Art>;
const PagesArt = () => <Art><path d="M30 59h29" stroke="#fbdcb8" strokeWidth="2.500" /><path d="M13 58l3-11L49 16c3-3 8-4 8-1 0 2-1 3-3 6L22 52z" fill="#f6f4f1" /><path d="M13 58l3-11 6 5z" fill="#b98a58" /></Art>;
const AppStoreArt = () => <Art><path d="M39 16 22 46M32 16l22 38M12 43.500h29M50 43.500h8M19 50l-3 5" stroke="#fff" strokeWidth="5.500" strokeLinecap="round" /></Art>;
const SettingsArt = () => (
  <Art><circle cx="35" cy="35" r="29" fill="#3d4043" /><circle cx="35" cy="35" r="27" fill="none" stroke="#a5a7a9" strokeWidth="4" strokeDasharray="1.800 1.730" /><circle cx="35" cy="35" r="21" fill="none" stroke="#aeb0b2" strokeWidth="4" /><circle cx="35" cy="35" r="6" fill="none" stroke="#aeb0b2" strokeWidth="3" />
    {[0, 120, 240].map((a) => <path key={a} d="M41 35h14" stroke="#aeb0b2" strokeWidth="4" transform={`rotate(${a} 35 35)`} />)}
  </Art>
);
const PhoneMirrorArt = () => (
  <Art><defs><linearGradient id="pm" x2="0" y2="1"><stop stopColor="#f3a78e" /><stop offset="1" stopColor="#ef8f84" /></linearGradient></defs>
    <rect x="20.500" y="5" width="29" height="60" rx="4" fill="#16222c" /><rect x="22" y="6.500" width="26" height="57" rx="3" fill="url(#pm)" /><path d="M48 20c-12 8-14 20-20 34l-6 9.500h26z" fill="#2a7e9c" /><path d="M48 40c-8 4-14 12-26 20v3.500h26z" fill="#143a56" /><path d="M46 16C36 24 34 38 24 52" stroke="#f7e4dc" strokeWidth="3" fill="none" /><rect x="30" y="8" width="10" height="3" rx="1.500" fill="#111" /></Art>
);
const FeedbackArt = () => <Art><rect x="4" y="4" width="62" height="62" rx="13" fill="#b062dd" /><path d="M19 17h32a5 5 0 0 1 5 5v21a5 5 0 0 1-5 5H33l-8 8v-8h-6a5 5 0 0 1-5-5V22a5 5 0 0 1 5-5z" fill="#fff" /><path d="M35 23v12M35 39v3" stroke="#9a46cc" strokeWidth="4.500" strokeLinecap="round" /></Art>;

const Overhang = styled.div<{ $m: string }>`
  margin: ${(p) => p.$m};
`;
const TextEditArt = () => (
  <Overhang $m="-8px 0 -4px">
    <svg width="70" height="82" viewBox="0 -8 70 82">
      <rect width="70" height="70" rx="15" fill="#fafafa" /><path d="M1 19h68M1 28h68M1 37h68M1 45h68M1 54h68M3 62h64" stroke="#b4b4b6" /><path d="M12 0v70" stroke="#e9b9b2" strokeWidth="1.300" />
      <path d="M61-6l6 1-27 56-11 21 3-24z" fill="#8fa3b8" /><path d="M62-6l3 .500L36 52l-5 7z" fill="#d5e2ec" />
    </svg>
  </Overhang>
);
const StickiesArt = () => (
  <Art><rect y="20" width="70" height="50" rx="14" fill="#cdb350" /><path d="M0 16A16 16 0 0 1 16 0h38a16 16 0 0 1 16 16v22c0 12-12 24-20 24H14C5 62 0 56 0 50z" fill="#f9e98a" /><path d="M12 24c3-8 5-16 8-12s-3 14 1 12 5-8 8-6-1 6 4 4 4-3 8-3h17" fill="none" stroke="#d7c25d" strokeWidth="3" /><path d="M12 34h46M12 46h24" stroke="#d7c25d" strokeWidth="4" /></Art>
);
const PinwheelArt = () => (
  <Overhang $m="-5px 0">
    <svg width="80" height="80" viewBox="-40 -40 80 80">
      <path d="M0-40a20 20 0 0 1 0 40z" fill="#da4c3e" /><path d="M40 0a20 20 0 0 1-40 0z" fill="#5087ee" /><path d="M0 40a20 20 0 0 1 0-40z" fill="#57a65c" /><path d="M-40 0a20 20 0 0 1 40 0z" fill="#f2bf42" />
    </svg>
  </Overhang>
);
const FirefoxArt = () => (
  <Art>
    <defs>
      <linearGradient id="fx" x1="0.700" y1="0" x2="0.300" y2="1"><stop stopColor="#86e8fb" /><stop offset="0.450" stopColor="#41a9f6" /><stop offset="1" stopColor="#2364dc" /></linearGradient>
    </defs>
    <path d="M8 24c1-4 3-7 5-9 1 3 2 5 4 7 4-4 8-5 12-5 3-7 7-11 12-14 1 7 4 10 9 15 0-1 0-2-1-4 7 5 13 14 13 24C62 54 50 65 35 65S6 54 6 38c0-5 1-10 2-14z" fill="url(#fx)" />
    <path d="M29 21c4-2 9-2 13 0 7 3 12 10 12 18 0 10-8 17-17 17-10 0-17-7-17-15 0-3 1-5 3-7 3-1 6-1 8-4-4 0-7-3-8-6 2-1 4-2 6-3z" fill="#30298f" />
    <path d="M18 35c5-4 9 0 14-1 2-1 4-2 5-4-5 0-9-1-10-5-5 0-9 4-9 10z" fill="#6fd0fa" />
    <circle cx="40" cy="38" r="8" fill="#43319f" />
  </Art>
);
const CursorArt = () => (
  <Art><path d="M35 10l21 12.500v25L35 60 14 47.500v-25z" fill="#6d6d6d" /><path d="M14 22.500h42L35 60V35z" fill="#f5f5f5" /><path d="M14 22.500 35 35v25L14 47.500z" fill="#3c3c3c" /><path d="M14 22.500 35 10l21 12.500z" fill="#9c9c9c" /><path d="M35 35v25l21-37.500z" fill="#d9d9d9" /><path d="M56 22.500v25L35 60z" fill="#767676" /></Art>
);
const TrashArt = () => (
  <Overhang $m="-8px 0 0">
    <svg width="62" height="84" viewBox="0 0 62 84">
      <defs><linearGradient id="tr"><stop stopColor="#7b7d7e" /><stop offset="0.400" stopColor="#5b5e60" /><stop offset="0.700" stopColor="#8a8c8e" /><stop offset="1" stopColor="#646668" /></linearGradient></defs>
      <path d="M1 15h60l-8 63c-1 5-43 5-44 0z" fill="url(#tr)" /><ellipse cx="31" cy="15" rx="30" ry="7" fill="#3b3d3f" stroke="#a5a7a8" strokeWidth="1.500" />
      <path d="M7 12 13 3l8 4 4-5 8 5 6-5 7 4 8 2-2 8-8 5-9-2-9 4-8-5-8 2z" fill="#f1efec" /><path d="M22 8l6 4-5 4zM40 9l6 3-6 4z" fill="#6db0a8" /><path d="M31 6l5 5-7 3z" fill="#c88a6a" /><path d="M13 10l6 2-5 5zM47 7l4 6-6 1zM27 15l5 2-5 3z" fill="#4b4b55" />
    </svg>
  </Overhang>
);

/* ---------- data ---------- */

const menus: [string, number][] = [
  ["File", 83], ["Edit", 89], ["View", 100], ["History", 128], ["Bookmarks", 176], ["Tools", 106], ["Window", 138], ["Help", 80],
];

const bookmarks: [React.ReactNode, number, string, number][] = [
  [<PlannerIcon />, 41, "ADHD Digital Plann...", 296],
  [<FolderIcon />, 38, "NICU", 119],
  [<GlobeIcon />, 38, "STUDENT CLASSLI...", 294],
  [<FolderIcon />, 39, "Coding", 136],
  [<SquareIcon />, 41, "SMART SQUARE", 238],
  [<CanvasIcon />, 41, "PARENT CANVAS", 248],
  [<GlobeIcon />, 38, "GOOGLE CAL", 206],
  [<TwitchIcon />, 39, "Twitch", 134],
  [<SourceIcon />, 38, "eSOURCE", 166],
  [<ChecklistIcon />, 39, "NOTION", 149],
  [<CloudIcon />, 41, "ONE DRIVE", 182],
  [<PinwheelFavicon />, 40, "Contact Tracy", 213],
  [<GlobeIcon />, 38, "Appointments 1 — S...", 295],
  [<GlobeIcon />, 38, "ICF Credentialed Co...", 280],
];

const nav: [React.ReactNode, string][] = [
  [<LayoutDashboard size={35.2} />, "Dashboard"],
  [<ListTodo size={35.2} />, "Projects"],
  [<MessageIcon />, "Messages"],
  [<ClipboardList size={35.2} />, "Meetings"],
  [<FileIcon />, "Toolkit"],
  [<ChartColumn size={35.2} />, "Collections"],
  [<BuildingIcon />, "Hosts"],
  [<Users size={35.2} />, "Recipients"],
  [<PhoneIcon />, "Phone Directory"],
  [<Car size={35.2} />, "Drivers"],
  [<FileIcon />, "Development"],
];

type DockApp = { bg?: string; art: React.ReactNode; running?: boolean; badge?: string; badgeRight?: number; bare?: boolean };
const v = (a: string, b: string) => `linear-gradient(180deg, ${a}, ${b})`;

const apps: DockApp[] = [
  { bg: "#eee", art: <FinderArt />, running: true },
  { bg: "#b1b3b4", art: <LaunchpadArt /> },
  { bg: v("#fff", "#dcdcdc"), art: <SafariArt /> },
  { bg: v("#80e474", "#57bb46"), art: <MessagesArt />, running: true, badge: "1,209", badgeRight: -1 },
  { bg: v("#3a72e6", "#55b8f5"), art: <MailArt /> },
  { bg: "#6bcb62", art: <MapsArt /> },
  { bg: "#fff", art: <PhotosArt />, running: true },
  { bg: v("#80e474", "#57bb46"), art: <FaceTimeArt />, badge: "9", badgeRight: 0 },
  { bg: "#f8f8f6", art: null, running: true },
  { bg: "transparent", art: <ContactsArt /> },
  { bg: "#fbfbfa", art: <RemindersArt />, badge: "6", badgeRight: 0 },
  { bg: "#f4f3f0", art: <NotesArt /> },
  { bg: "#fff", art: <FreeformArt /> },
  { bg: v("#ec5a6c", "#e23a40"), art: <MusicArt /> },
  { bg: v("#293632", "#0f1516"), art: <><FaApple size={25} color="#fff" /><TvLabel>tv</TvLabel></> },
  { bg: "#fff", art: <NewsArt /> },
  { bg: v("#53b6f6", "#305fe6"), art: <KeynoteArt /> },
  { bg: v("#8fec6f", "#5fcc45"), art: <NumbersArt /> },
  { bg: v("#f3ad48", "#ee8f36"), art: <PagesArt /> },
  { bg: v("#46a7f0", "#2860d8"), art: <AppStoreArt /> },
  { bg: v("#cfd8e0", "#8c8f90"), art: <SettingsArt />, running: true, badge: "1", badgeRight: 0 },
  { bg: "#b4b4b5", art: <PhoneMirrorArt /> },
  { bg: "#9548c4", art: <FeedbackArt /> },
];
const userApps: DockApp[] = [
  { bg: "#fff", art: <><ChromeArt /><BetaRibbon>BETA</BetaRibbon></>, running: true },
  { bg: "#fff", art: <ChromeArt />, running: true },
  { art: <TextEditArt />, running: true, bare: true },
  { bg: "#cdb350", art: <StickiesArt />, running: true },
  { bg: "#fff", art: <VscVscode size={50} color="#2d7fd0" />, running: true },
  { bg: v("#fff", "#dfe6f2"), art: <KnotIcon size={52} color="#22262c" />, running: true },
  { art: <PinwheelArt />, running: true, bare: true },
  { bg: "#22173f", art: <FirefoxArt />, running: true },
  { bg: "#000", art: <CursorArt />, running: true },
];

const DockIcon = ({ app }: { app: DockApp }) => (
  <DockSlot>
    {app.bare ? app.art : app.art === null ? (
      <CalendarTile $bg={app.bg!}><CalendarMonth>JUN</CalendarMonth>23</CalendarTile>
    ) : (
      <Tile $bg={app.bg!}>{app.art}</Tile>
    )}
    {app.badge && <Badge $right={app.badgeRight ?? 0}>{app.badge}</Badge>}
    {app.running && <Running />}
  </DockSlot>
);

const PageThumb = ({ bar }: { bar: string }) => (
  <Thumb>
    <ThumbBand $h={6} $c="#f3a9b4" /><ThumbBand $h={5} $c="#eccfd8" /><ThumbBand $h={4} $c="#b9bde0" /><ThumbBand $h={7} $c={bar} />
    <ThumbText $w={26} $x={6} /><ThumbText $w={34} $x={26} /><ThumbText $w={18} $x={6} /><ThumbText $w={40} $x={22} /><ThumbText $w={30} $x={6} /><ThumbText $w={32} $x={10} />
    <ThumbBadge><ChromeArt size={26} /></ThumbBadge>
  </Thumb>
);

/* ---------- app ---------- */

export default function App() {
  return (
    <>
      <GlobalStyle />
      <Desktop>
        <StickyNote>
          <StickyLine $left={202} $top={24} $ls={-1}>om/nicu</StickyLine>
          <StickyLine $left={22} $top={105}>git clone [https://github</StickyLine>
        </StickyNote>

        <MenuBar>
          <AppleMark><FaApple size={32} /></AppleMark>
          <MenuLabel $w={364} $bold>Firefox Developer Edition</MenuLabel>
          {menus.map(([t, w]) => <MenuLabel key={t} $w={w}>{t}</MenuLabel>)}
          <StatusArea>
            <StatusItem $w={31} $gap={0}><KnotIcon /></StatusItem>
            <StatusItem $w={31} $gap={40}><CleanerIcon /></StatusItem>
            <StatusItem $w={45} $gap={40}><CloudSyncIcon /></StatusItem>
            <StatusItem $w={32} $gap={40}><FanIcon /></StatusItem>
            <StatusItem $w={33} $gap={43}><SiMalwarebytes size={33} color="#fff" /></StatusItem>
            <StatusItem $w={29} $gap={56}><SiShazam size={29} /></StatusItem>
            <StatusItem $w={29} $gap={53}><LlamaIcon /></StatusItem>
            <StatusItem $w={39} $gap={35}><AirPodsIcon /></StatusItem>
            <StatusItem $w={31} $gap={36}><AirdropIcon /></StatusItem>
            <StatusItem $w={18} $gap={42}><Bluetooth size={34} strokeWidth={2} /></StatusItem>
            <StatusItem $w={34} $gap={45}><WifiGlyph /></StatusItem>
            <StatusItem $w={44} $gap={38}><Percent>13%</Percent></StatusItem>
            <StatusItem $w={51} $gap={8}><BatteryIcon /></StatusItem>
            <StatusItem $w={26} $gap={37}><SearchGlyph /></StatusItem>
            <StatusItem $w={27} $gap={30}><ControlIcon /></StatusItem>
            <StatusItem $w={10} $gap={9}><MicDot /></StatusItem>
            <StatusItem $w={28} $gap={27}><Siri /></StatusItem>
            <ClockText>{"Mon Jun 23  11:16 PM"}</ClockText>
          </StatusArea>
        </MenuBar>

        <BrowserWindow>
          <TabStrip>
            <Lights><Light $c="#ed6a5e" /><Light $c="#f5bf4f" /><Light $c="#61c554" /></Lights>
            <FirefoxViewIcon />
            <StripDivider />
            <Tab>
              <TabFavicon><ReplitIcon /></TabFavicon>
              <TabTitle>SandwichSync - Replit</TabTitle>
              <CrossIcon />
            </Tab>
            <Tab $active>
              <TabTitle>The Sandwich Project</TabTitle>
              <CrossIcon />
            </Tab>
            <NewTab>
              <svg width="26" height="26" viewBox="0 0 26 26" stroke="#fbfbfe" strokeWidth="2.300" strokeLinecap="round"><path d="M13 1.500v23M1.500 13h23" /></svg>
            </NewTab>
            <AllTabs>
              <svg width="25" height="14" viewBox="0 0 25 14" fill="none" stroke="#fbfbfe" strokeWidth="2.300" strokeLinecap="round" strokeLinejoin="round"><path d="M1.500 1.500l11 11 11-11" /></svg>
            </AllTabs>
          </TabStrip>

          <NavBar>
            <NavSlot $w={29}><ArrowIcon /></NavSlot>
            <NavSlot $w={29} $gap={44}><ArrowIcon flip color="#77767d" /></NavSlot>
            <NavSlot $w={30} $gap={42}><ReloadIcon /></NavSlot>
            <UrlBar>
              <NavSlot $w={29}><ShieldIcon /></NavSlot>
              <NavSlot $w={24} $gap={30}><LockIcon /></NavSlot>
              <Url>bb1d30f8-d852-4bae-abcd-b7c4521e3d85-00-x9tsn55inx51.spock.replit.dev<UrlPath>/projects</UrlPath></Url>
              <StarIcon />
            </UrlBar>
            <NavSlot $w={27} $gap={256}><DownloadIcon /></NavSlot>
            <NavSlot $w={29} $gap={45}><WrenchIcon /></NavSlot>
            <NavSlot $w={33} $gap={41}><AccountIcon /><NoticeDot /></NavSlot>
            <NavSlot $w={27} $gap={43}><PuzzleIcon /></NavSlot>
            <NavSlot $w={26} $gap={45}><BurgerIcon /></NavSlot>
          </NavBar>

          <BookmarkBar>
            {bookmarks.map(([icon, iw, text, w]) => (
              <Bookmark key={text} $w={w}>
                <BookmarkIcon $w={iw}>{icon}</BookmarkIcon>
                <BookmarkText>{text}</BookmarkText>
              </Bookmark>
            ))}
            <BookmarkEnd>
              <BookmarkIcon $w={56}>
                <svg width="26" height="26" viewBox="0 0 26 26" fill="none" stroke="#fbfbfe" strokeWidth="2.300" strokeLinecap="round" strokeLinejoin="round"><path d="M1.500 1.500 12.500 13l-11 11.500M13.500 1.500l11 11.500-11 11.500" /></svg>
              </BookmarkIcon>
              <BookmarkIcon $w={38}><FolderIcon /></BookmarkIcon>
              <BookmarkText>Other Bookmarks</BookmarkText>
            </BookmarkEnd>
          </BookmarkBar>

          <Banner>
            <span>This is a temporary development preview, and these links are not for public use. <DeployLink>Deploy your app</DeployLink> for secure sharing or use an invite link.</span>
            <CrossIcon size={20} color="#b6c4da" />
          </Banner>

          <Page>
            <Sidebar>
              <Brand>
                <BrandMark><SandwichIcon /></BrandMark>
                <BrandName>The Sandwich Project</BrandName>
              </Brand>
              <NavList>
                {nav.map(([icon, label]) => (
                  <NavRow key={label} $active={label === "Projects"}>{icon}<span>{label}</span></NavRow>
                ))}
              </NavList>
            </Sidebar>
            <Main>
              <PageHead>
                <div>
                  <Title>Project Management</Title>
                  <Subtitle>Organize and track all team projects with interactive task management</Subtitle>
                </div>
                <NewProject><Plus size={35.2} /> New Project</NewProject>
              </PageHead>
              <Tabs>
                <TabTrigger $active><CircleCheckBig size={35.2} />Active (0)</TabTrigger>
                <TabTrigger><FolderOpen size={35.2} />Available (0)</TabTrigger>
                <TabTrigger><Clock size={35.2} />Waiting (0)</TabTrigger>
                <TabTrigger><CircleCheckBig size={35.2} />Completed (0)</TabTrigger>
              </Tabs>
              <Empty>No active projects. Create a new project to get started.</Empty>
            </Main>
          </Page>
        </BrowserWindow>

        <Dock>
          {apps.map((a, i) => <DockIcon key={i} app={a} />)}
          <DockSeparator />
          {userApps.map((a, i) => <DockIcon key={i} app={a} />)}
          <DockSeparator />
          <DockSlot>
            <DocSheet><DocLine $w={34} /><DocLine $w={30} /><DocLine $w={34} /><DocLine $w={26} /><DocType>DOCX</DocType></DocSheet>
          </DockSlot>
          <DockSlot $w={90}><PageThumb bar="#15161c" /></DockSlot>
          <DockSlot $w={90}><PageThumb bar="#2f62cf" /></DockSlot>
          <DockSlot $w={90}><TrashArt /></DockSlot>
        </Dock>
      </Desktop>
    </>
  );
}
